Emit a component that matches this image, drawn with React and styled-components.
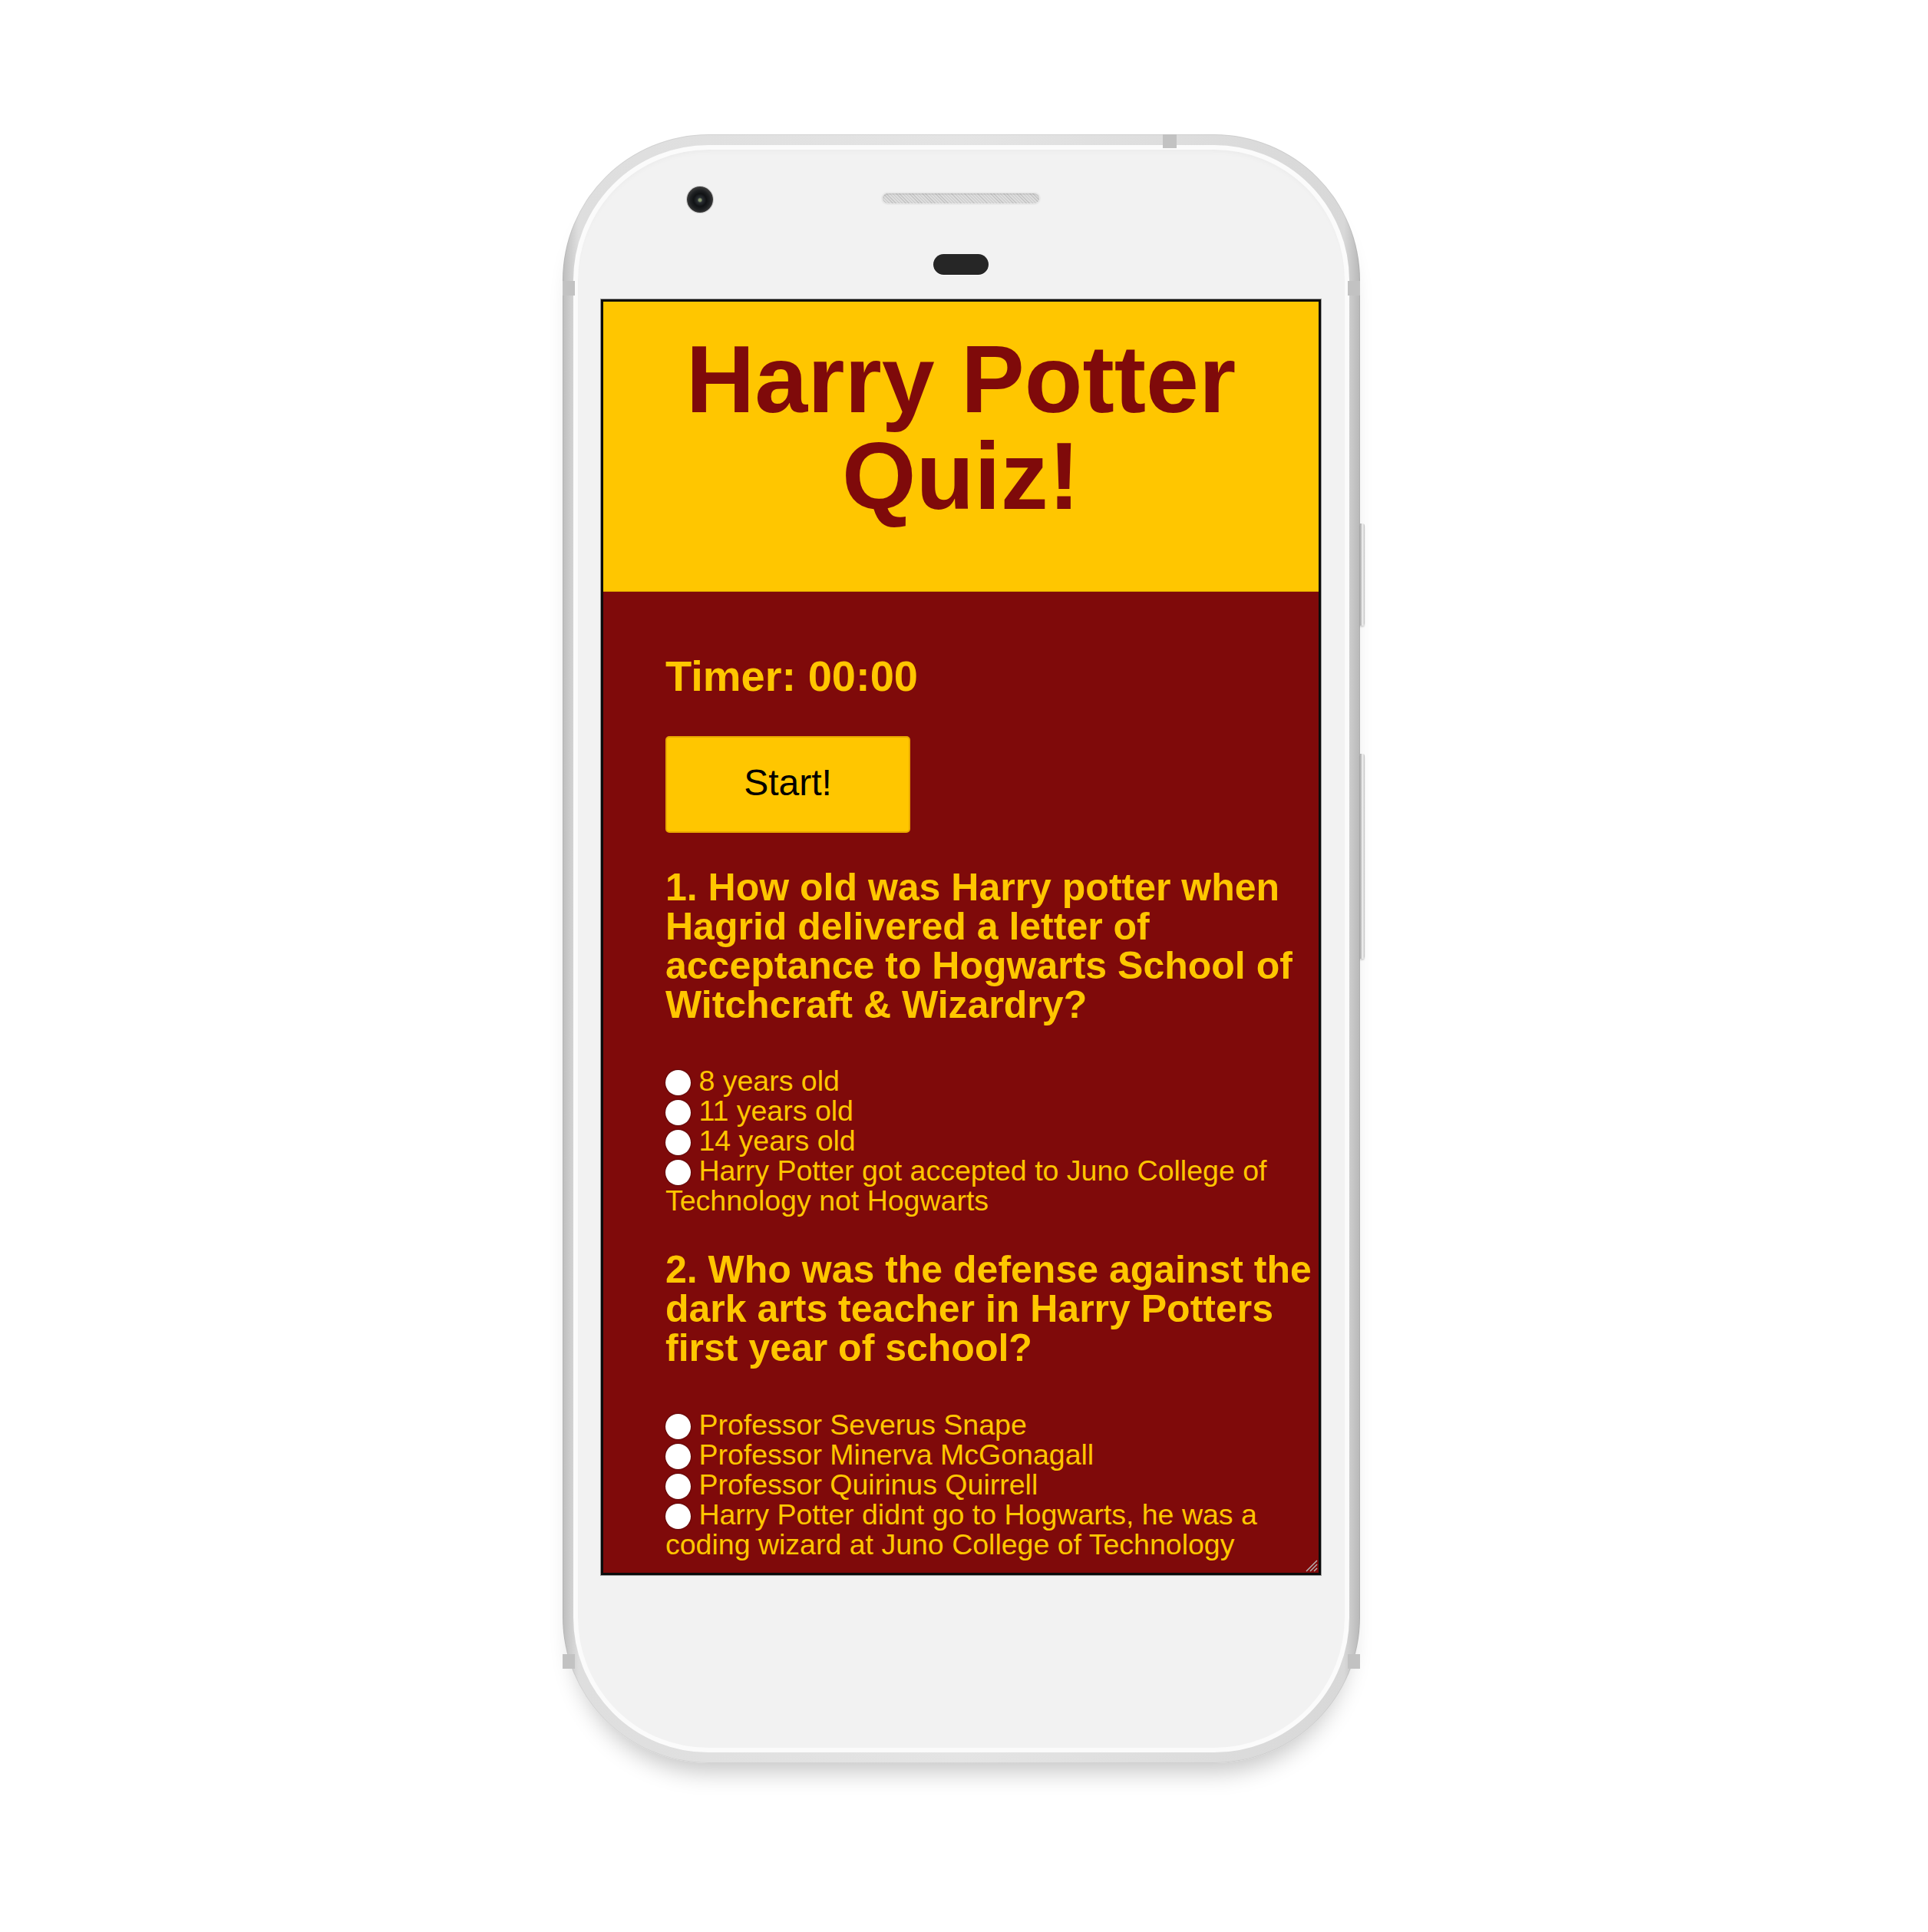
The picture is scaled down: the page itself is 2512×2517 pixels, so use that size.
import React from "react";
import styled, { createGlobalStyle } from "styled-components";

const maroon = "#7f0a0a";
const gold = "#ffc600";

const GlobalStyle = createGlobalStyle`
  html, body {
    margin: 0;
    padding: 0;
    background: #ffffff;
  }
  * {
    box-sizing: border-box;
  }
`;

const Page = styled.div`
  width: 2512px;
  min-height: 2517px;
  padding: 175px 0 0 733px;
  font-family: "Liberation Sans", Arial, Helvetica, sans-serif;
`;

const Phone = styled.div`
  position: relative;
  width: 1039px;
  height: 2122px;
  padding: 14px;
  border-radius: 190px;
  background: linear-gradient(
    90deg,
    #bdbdbd 0%,
    #dedede 2%,
    #e4e4e4 50%,
    #d8d8d8 98%,
    #b8b8b8 100%
  );
  box-shadow: 0 26px 30px -14px rgba(0, 0, 0, 0.22),
    inset 0 0 0 1px rgba(0, 0, 0, 0.06);
`;

const Face = styled.div`
  height: 100%;
  border: 6px solid #fbfbfb;
  border-radius: 176px;
  background: #f2f2f2;
  padding: 0 31px 0 30px;
  display: flex;
  flex-direction: column;
  box-shadow: inset 0 6px 10px -6px rgba(0, 0, 0, 0.05);
`;

const Bezel = styled.div`
  height: 195px;
  padding-top: 47px;
  display: grid;
  grid-template-columns: 1fr auto 1fr;
  grid-template-rows: 36px 27px;
  row-gap: 53px;
  align-items: center;
`;

const Camera = styled.div`
  grid-column: 1;
  grid-row: 1;
  justify-self: start;
  margin-left: 112px;
  width: 34px;
  height: 34px;
  border-radius: 50%;
  background: radial-gradient(
    circle at 50% 52%,
    #8a9a70 0 6%,
    #2a2e33 14%,
    #101214 34%,
    #1f2123 52%,
    #3a3a3a 68%,
    #141414 86%,
    #2a2a2a 100%
  );
  box-shadow: 0 0 0 1px #cfcfcf;
`;

const Speaker = styled.div`
  grid-column: 2;
  grid-row: 1;
  width: 204px;
  height: 13px;
  margin-top: -3px;
  border-radius: 7px;
  background: repeating-linear-gradient(
    45deg,
    #c6c6c6 0 1px,
    #dcdcdc 1px 3px
  );
  box-shadow: 0 0 0 2px #e9e9e9, inset 0 1px 2px rgba(0, 0, 0, 0.14);
`;

const Sensor = styled.div`
  grid-column: 2;
  grid-row: 2;
  justify-self: center;
  width: 72px;
  height: 27px;
  border-radius: 14px;
  background: #262626;
  box-shadow: 0 1px 0 #ffffff;
`;

const Screen = styled.div`
  position: relative;
  width: 938px;
  height: 1662px;
  border: 3px solid #0b0b0b;
  outline: 1px solid #9a9a9a;
  display: flex;
  flex-direction: column;
  overflow: hidden;
`;

const Header = styled.header`
  height: 378px;
  flex: none;
  padding-top: 38px;
  background: ${gold};
  border-bottom: 1px solid #d9a300;
`;

const Title = styled.h1`
  margin: 0;
  color: ${maroon};
  font-size: 124px;
  line-height: 126px;
  font-weight: 700;
  text-align: center;
`;

const Main = styled.main`
  flex: 1;
  background: ${maroon};
  padding: 82px 0 0 81px;
  color: ${gold};
`;

const Timer = styled.h3`
  margin: 0;
  font-size: 56px;
  line-height: 56px;
  font-weight: 700;
`;

const StartButton = styled.button`
  display: block;
  margin-top: 50px;
  width: 319px;
  height: 126px;
  background: ${gold};
  border: 2px solid #e9a800;
  border-radius: 5px;
  color: #000000;
  font-family: inherit;
  font-size: 48px;
  line-height: 1;
  padding: 0 0 4px;
`;

const Question = styled.h2`
  margin: ${(p) => p.$top}px 0 0;
  font-size: 50px;
  line-height: 51px;
  font-weight: 700;
`;

const Options = styled.div`
  margin-top: ${(p) => p.$top}px;
  font-size: 37.5px;
  line-height: 39px;
`;

const Option = styled.label`
  display: block;
`;

const Radio = styled.input`
  appearance: none;
  -webkit-appearance: none;
  margin: 0;
  width: 33px;
  height: 33px;
  border-radius: 50%;
  vertical-align: -6px;
  background: radial-gradient(circle, #ffffff 0 62%, #f1f1f1 80%, #c9c9c9 100%);
  box-shadow: 0 0 1px 1px rgba(0, 0, 0, 0.25);
`;

const Grip = styled.svg`
  position: absolute;
  right: 1px;
  bottom: 1px;
`;

const SideButton = styled.div`
  position: absolute;
  right: -6px;
  top: ${(p) => p.$top}px;
  width: 6px;
  height: ${(p) => p.$h}px;
  border-radius: 0 3px 3px 0;
  background: linear-gradient(90deg, #a9a9a9, #f3f3f3 60%, #bdbdbd);
  box-shadow: 0 2px 2px rgba(0, 0, 0, 0.15);
`;

const Band = styled.div`
  position: absolute;
  background: #c2c2c2;
  ${(p) =>
    p.$side === "top"
      ? `top: 0; left: ${p.$at}px; width: 18px; height: 18px;`
      : `${p.$side}: 0; top: ${p.$at}px; width: 16px; height: 19px;`}
`;

const firstAnswers = [
  "8 years old",
  "11 years old",
  "14 years old",
  "Harry Potter got accepted to Juno College of Technology not Hogwarts",
];

const secondAnswers = [
  "Professor Severus Snape",
  "Professor Minerva McGonagall",
  "Professor Quirinus Quirrell",
  "Harry Potter didnt go to Hogwarts, he was a coding wizard at Juno College of Technology",
];

function AnswerList({ name, answers, top }) {
  return (
    <Options $top={top}>
      {answers.map((text) => (
        <Option key={text}>
          <Radio type="radio" name={name} /> {text}
        </Option>
      ))}
    </Options>
  );
}

function App() {
  return (
    <Page>
      <GlobalStyle />
      <Phone>
        <Band $side="top" $at={782} />
        <Band $side="left" $at={191} />
        <Band $side="right" $at={191} />
        <Band $side="left" $at={1980} />
        <Band $side="right" $at={1980} />
        <SideButton $top={507} $h={133} />
        <SideButton $top={807} $h={267} />
        <Face>
          <Bezel>
            <Camera />
            <Speaker />
            <Sensor />
          </Bezel>
          <Screen>
            <Header>
              <Title>Harry Potter Quiz!</Title>
            </Header>
            <Main>
              <Timer>Timer: 00:00</Timer>
              <StartButton>Start!</StartButton>
              <Question $top={46}>
                1. How old was Harry potter when Hagrid delivered a letter of
                acceptance to Hogwarts School of Witchcraft &amp; Wizardry?
              </Question>
              <AnswerList name="q1" answers={firstAnswers} top={54} />
              <Question $top={45}>
                2. Who was the defense against the dark arts teacher in Harry
                Potters first year of school?
              </Question>
              <AnswerList name="q2" answers={secondAnswers} top={55} />
            </Main>
            <Grip width="18" height="18" viewBox="0 0 18 18">
              <line x1="17" y1="3" x2="3" y2="17" stroke="#b5b5b5" strokeWidth="1.5" />
              <line x1="17" y1="8" x2="8" y2="17" stroke="#b5b5b5" strokeWidth="1.5" />
              <line x1="17" y1="13" x2="13" y2="17" stroke="#b5b5b5" strokeWidth="1.5" />
            </Grip>
          </Screen>
        </Face>
      </Phone>
    </Page>
  );
}

export default App;
